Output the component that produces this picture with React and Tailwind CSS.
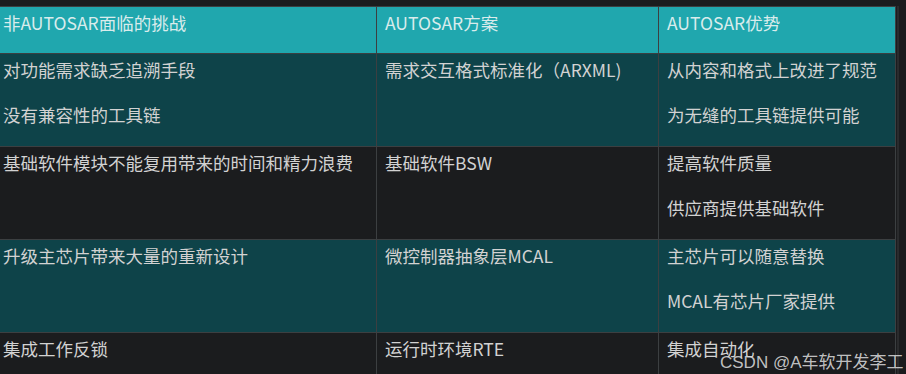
import React from "react";

const rows = [
  {
    bg: "bg-[#0e4349]",
    cells: [
      ["对功能需求缺乏追溯手段", "没有兼容性的工具链"],
      ["需求交互格式标准化（ARXML)"],
      ["从内容和格式上改进了规范", "为无缝的工具链提供可能"],
    ],
  },
  {
    bg: "bg-[#1b1c1e]",
    cells: [
      ["基础软件模块不能复用带来的时间和精力浪费"],
      ["基础软件BSW"],
      ["提高软件质量", "供应商提供基础软件"],
    ],
  },
  {
    bg: "bg-[#0e4349]",
    cells: [
      ["升级主芯片带来大量的重新设计"],
      ["微控制器抽象层MCAL"],
      ["主芯片可以随意替换", "MCAL有芯片厂家提供"],
    ],
  },
  {
    bg: "bg-[#1b1c1e]",
    cells: [["集成工作反锁"], ["运行时环境RTE"], ["集成自动化"]],
  },
];

const headers = ["非AUTOSAR面临的挑战", "AUTOSAR方案", "AUTOSAR优势"];

export default function App() {
  return (
    <div
      className="relative h-[374px] w-[906px] overflow-hidden bg-[#1b1c1e] pt-[6px] text-[17.5px] leading-[26px] text-[#d2d2d2]"
      style={{ fontFamily: '"Noto Sans CJK SC", "Noto Sans", sans-serif' }}
    >
      {/* table: gaps show the border colour */}
      <div className="grid w-[896px] grid-cols-[376px_281px_236px] grid-rows-[46px_92px_92px_92px_92px] gap-px border-t border-r border-[#3c3f41] bg-[#3c3f41]">
        {headers.map((h, i) => (
          <div
            key={h}
            className={`bg-[#20a7ae] pt-[3px] text-[#d9ecec] ${i === 0 ? "pl-[3px]" : "pl-[8px]"}`}
          >
            {h}
          </div>
        ))}
        {rows.map((row, r) =>
          row.cells.map((lines, i) => (
            <div
              key={`${r}-${i}`}
              className={`${row.bg} pt-[3px] ${i === 0 ? "pl-[3px]" : "pl-[8px]"} flex flex-col gap-[19px]`}
            >
              {lines.map((t) => (
                <p key={t} className="whitespace-nowrap">
                  {t}
                </p>
              ))}
            </div>
          ))
        )}
      </div>

      {/* scrollbar edge */}
      <div className="absolute top-[6px] right-[7px] h-[368px] w-[2px] bg-[#2a2b2d]" />

      {/* watermark */}
      <div
        className="absolute left-[720px] top-[351px] whitespace-nowrap text-[17px] leading-[24px] text-[#d6d6d6]/90"
        style={{ fontFamily: '"Liberation Sans", "Noto Sans CJK SC", sans-serif' }}
      >
        CSDN @A车软开发李工
      </div>
    </div>
  );
}
